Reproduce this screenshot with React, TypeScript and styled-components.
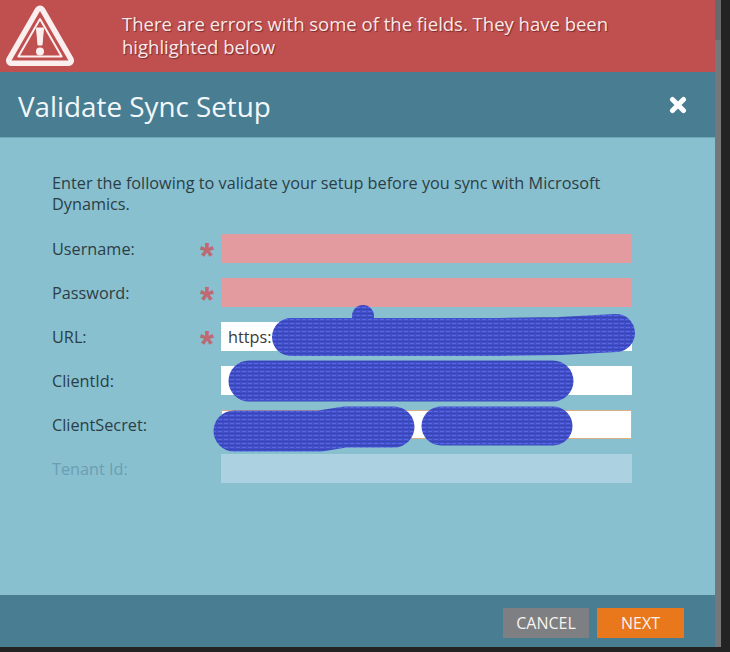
import React from 'react';
import styled, { createGlobalStyle } from 'styled-components';

const GlobalStyle = createGlobalStyle`
  html, body {
    margin: 0;
    padding: 0;
    background: #232323;
    overflow: hidden;
  }
  * {
    box-sizing: border-box;
  }
`;

const fields = [
  { label: 'Username:', required: true, state: 'error', value: '' },
  { label: 'Password:', required: true, state: 'error', value: '' },
  { label: 'URL:', required: true, state: 'normal', value: 'https:' },
  { label: 'ClientId:', required: false, state: 'normal', value: '' },
  { label: 'ClientSecret:', required: false, state: 'focus', value: '' },
  { label: 'Tenant Id:', required: false, state: 'disabled', value: '' },
];

const WarningIcon = () => (
  <svg width="70" height="63" viewBox="0 0 70 63">
    <path d="M35 7 L63.5 56.5 H6.5 Z" fill="#fbeeee" stroke="#fbeeee" strokeWidth="11" strokeLinejoin="round" />
    <path d="M35 7 L63.5 56.5 H6.5 Z" fill="#c05050" />
    <path d="M35 15 L56.6 52.5 H13.4 Z" fill="none" stroke="#fbeeee" strokeWidth="2" strokeLinejoin="round" />
    <path d="M31.5 24 H38.5 L37 41 H33 Z" fill="#fbeeee" stroke="#fbeeee" strokeLinejoin="round" />
    <circle cx="35" cy="47.5" r="4" fill="#fbeeee" />
  </svg>
);

const Scribble = () => (
  <ScribbleLayer width="730" height="652" viewBox="0 0 730 652">
    <defs>
      <pattern id="marker" width="6" height="4" patternUnits="userSpaceOnUse">
        <rect width="6" height="4" fill="#414fca" />
        <rect y="1" width="6" height="1" fill="#3745b4" />
        <rect x="2" y="3" width="4" height="1" fill="#5866e2" />
      </pattern>
    </defs>
    <g fill="none" stroke="url(#marker)" strokeLinecap="round" strokeLinejoin="round">
      <circle cx="363" cy="316" r="11" fill="url(#marker)" stroke="none" />
      <path d="M291 337 H500 L560 336 L616 333" strokeWidth="38" />
      <path d="M249 381 H553" strokeWidth="41" />
      <path d="M234 431 H320 L345 427 H394" strokeWidth="41" />
      <path d="M441 426 H553" strokeWidth="39" />
    </g>
  </ScribbleLayer>
);

export default function App() {
  return (
    <Screen>
      <GlobalStyle />
      <Dialog>
        <Banner>
          <WarningIcon />
          <BannerText>There are errors with some of the fields. They have been highlighted below</BannerText>
        </Banner>
        <Header>
          <Title>Validate Sync Setup</Title>
          <CloseButton>
            <svg width="18" height="18" viewBox="0 0 18 18">
              <path d="M3.5 3.5 L14.5 14.5 M14.5 3.5 L3.5 14.5" stroke="#fff" strokeWidth="5" strokeLinecap="round" />
            </svg>
          </CloseButton>
        </Header>
        <Body>
          <Intro>Enter the following to validate your setup before you sync with Microsoft Dynamics.</Intro>
          <Form>
            {fields.map((f) => (
              <Row key={f.label}>
                <Label $disabled={f.state === 'disabled'}>{f.label}</Label>
                <Star>{f.required ? '*' : ''}</Star>
                <Input $state={f.state}>{f.value}</Input>
              </Row>
            ))}
          </Form>
        </Body>
        <Footer>
          <Button $color="#7e7f82">CANCEL</Button>
          <Button $color="#e9771c" $wide>NEXT</Button>
        </Footer>
      </Dialog>
      <Strip />
      <Scribble />
    </Screen>
  );
}

//Styling -------

const Screen = styled.div`
  position: relative;
  display: flex;
  align-items: flex-start;
  width: 730px;
  height: 652px;
  background: #232323;
  font-family: 'Open Sans', sans-serif;
`;

const Dialog = styled.div`
  display: flex;
  flex-direction: column;
  width: 715px;
  height: 647px;
  background: #88c0d0;
`;

const Strip = styled.div`
  width: 6px;
  height: 647px;
  background: linear-gradient(#666a6c 0, #666a6c 40px, #75787a 40px);
`;

const Banner = styled.div`
  display: flex;
  align-items: flex-start;
  height: 72px;
  padding: 4px 0 0 5px;
  background: #c05050;
  svg {
    flex: none;
  }
`;

const BannerText = styled.div`
  width: 520px;
  margin: 8px 0 0 47px;
  color: #fbe9e9;
  font-size: 18.5px;
  line-height: 23px;
  text-shadow: 1px 1px 1px rgba(70, 20, 20, 0.6);
`;

const Header = styled.div`
  display: flex;
  align-items: center;
  justify-content: space-between;
  height: 66px;
  padding: 0 28px 0 18px;
  background: #487d92;
  border-bottom: 1px solid #6fa7b9;
`;

const Title = styled.h1`
  margin: 3px 0 0;
  color: #f2f8fa;
  font-size: 27.8px;
  font-weight: 400;
`;

const CloseButton = styled.div`
  display: flex;
  width: 18px;
  height: 18px;
`;

const Body = styled.div`
  flex: 1;
  padding: 35px 0 0 52px;
  background: #88c0d0;
`;

const Intro = styled.p`
  width: 570px;
  margin: 0;
  color: #2c3e45;
  font-size: 16.25px;
  line-height: 21px;
`;

const Form = styled.div`
  display: flex;
  flex-direction: column;
  gap: 15px;
  margin-top: 19px;
`;

const Row = styled.div`
  display: flex;
  align-items: center;
  height: 29px;
`;

const Label = styled.div<{ $disabled: boolean }>`
  width: 147px;
  color: ${(p) => (p.$disabled ? '#6b9fb1' : '#2c3e45')};
  font-size: 16.25px;
`;

const Star = styled.div`
  width: 22px;
  height: 29px;
  padding-left: 1px;
  color: #bd6a70;
  font-family: 'Liberation Sans', Arial, sans-serif;
  font-size: 36px;
  font-weight: 700;
  line-height: 45px;
`;

const inputBackground: Record<string, string> = {
  error: '#e39ba0',
  normal: '#ffffff',
  focus: '#ffffff',
  disabled: '#acd1e0',
};

const Input = styled.div<{ $state: string }>`
  width: 411px;
  height: 29px;
  padding: 0 7px;
  border: ${(p) => (p.$state === 'focus' ? '1.5px solid #d9ae85' : 'none')};
  background: ${(p) => inputBackground[p.$state]};
  color: #3a3a3a;
  font-size: 16.25px;
  line-height: 30px;
`;

const Footer = styled.div`
  display: flex;
  justify-content: flex-end;
  align-items: flex-start;
  gap: 8px;
  height: 52px;
  padding: 13px 31px 0 0;
  background: #487d92;
`;

const Button = styled.div<{ $color: string; $wide?: boolean }>`
  display: flex;
  align-items: center;
  justify-content: center;
  width: ${(p) => (p.$wide ? '87px' : '86px')};
  height: 30px;
  background: ${(p) => p.$color};
  color: #f6f3ee;
  font-size: 16px;
`;

const ScribbleLayer = styled.svg`
  position: absolute;
  top: 0;
  left: 0;
  pointer-events: none;
`;
